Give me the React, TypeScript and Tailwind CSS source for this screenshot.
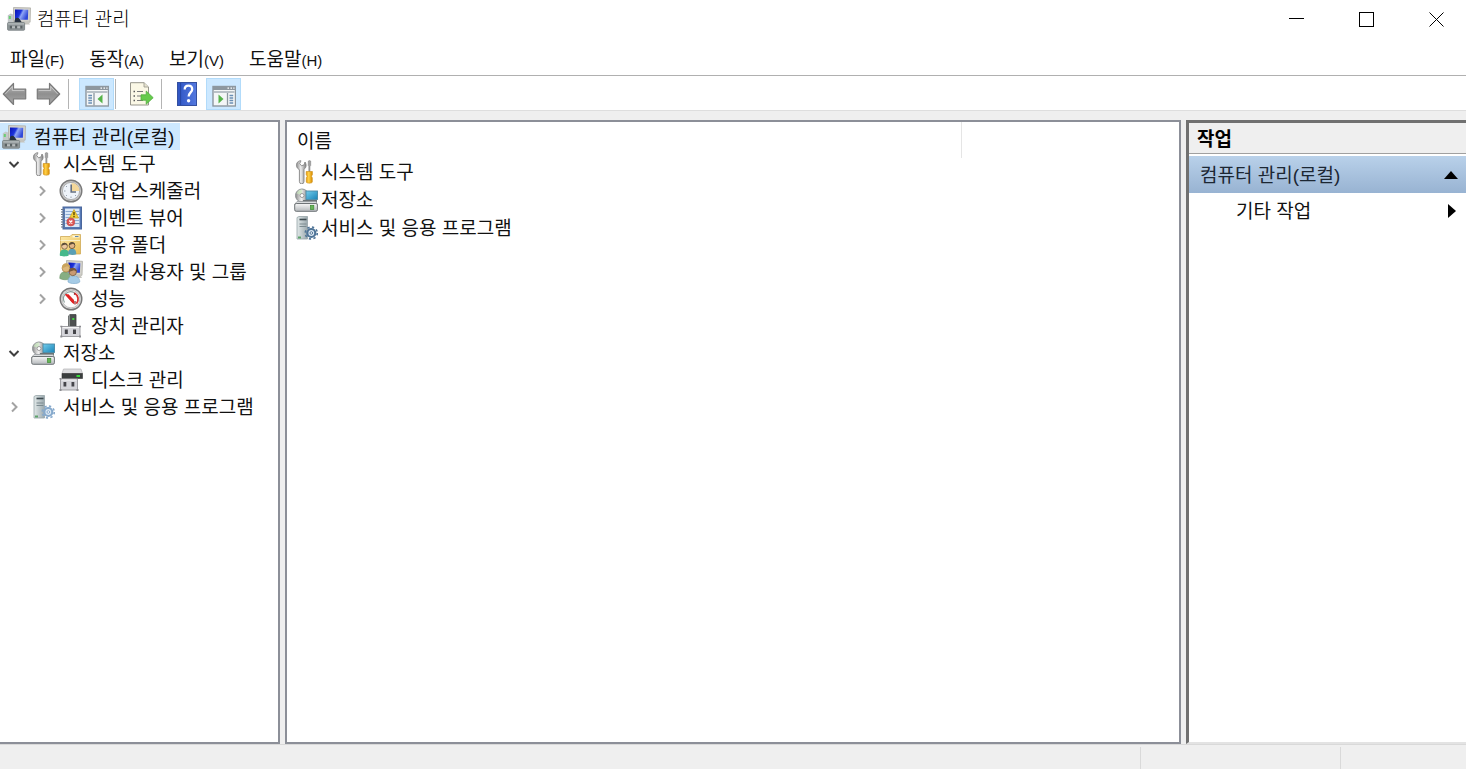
import { useState } from "react";
import type { ReactNode } from "react";

type IconProps = { className?: string };

function Icon({ className = "size-6", children }: IconProps & { children: ReactNode }) {
  return (
    <svg viewBox="0 0 24 24" className={`${className} shrink-0`} aria-hidden="true">
      {children}
    </svg>
  );
}

// Gradients shared by all icons
function IconDefs() {
  return (
    <svg className="absolute size-0" aria-hidden="true">
      <defs>
        <linearGradient id="screen" x1="0" y1="0" x2="1" y2="0.4">
          <stop offset="0" stopColor="#0a14b4" />
          <stop offset="0.45" stopColor="#1c34dc" />
          <stop offset="0.6" stopColor="#8fa6f5" />
          <stop offset="1" stopColor="#3049d8" />
        </linearGradient>
        <linearGradient id="metal" x1="0" y1="0" x2="1" y2="0">
          <stop offset="0" stopColor="#8a8a8a" />
          <stop offset="0.45" stopColor="#efefef" />
          <stop offset="1" stopColor="#7c7c7c" />
        </linearGradient>
        <linearGradient id="arrow" x1="0" y1="0" x2="0" y2="1">
          <stop offset="0" stopColor="#b8b8b8" />
          <stop offset="0.5" stopColor="#8f8f8f" />
          <stop offset="1" stopColor="#ababab" />
        </linearGradient>
        <linearGradient id="gold" x1="0" y1="0" x2="1" y2="0">
          <stop offset="0" stopColor="#e89a08" />
          <stop offset="0.4" stopColor="#ffd24a" />
          <stop offset="1" stopColor="#d98a00" />
        </linearGradient>
        <linearGradient id="book" x1="0" y1="0" x2="1" y2="0">
          <stop offset="0" stopColor="#2f55c4" />
          <stop offset="1" stopColor="#5479df" />
        </linearGradient>
        <linearGradient id="folder" x1="0" y1="0" x2="1" y2="1">
          <stop offset="0" stopColor="#fde9a6" />
          <stop offset="1" stopColor="#e9bf58" />
        </linearGradient>
        <linearGradient id="cyan" x1="0" y1="0" x2="1" y2="1">
          <stop offset="0" stopColor="#74cdec" />
          <stop offset="1" stopColor="#1984b8" />
        </linearGradient>
        <linearGradient id="box" x1="0" y1="0" x2="0" y2="1">
          <stop offset="0" stopColor="#f8f8f8" />
          <stop offset="1" stopColor="#b4b8bb" />
        </linearGradient>
        <linearGradient id="tower" x1="0" y1="0" x2="1" y2="0">
          <stop offset="0" stopColor="#e2e9e9" />
          <stop offset="1" stopColor="#9aa8ad" />
        </linearGradient>
      </defs>
    </svg>
  );
}

function ComputerIcon({ className }: IconProps) {
  return (
    <Icon className={className}>
      <path d="M6.500.5l17 .4-.4 14.300H6.500z" fill="#d3d2cc" stroke="#aeada6" strokeWidth="0.800" />
      <path d="M8 2.600l13.200.2-.3 10H8z" fill="url(#screen)" />
      <path d="M15 15.200h6.500l1.500 2.400h-8z" fill="#c6c5bf" />
      <path d="M.8 8.200l3-1.700 2.200 1V16H.8z" fill="#c3c7c9" />
      <path d="M1.800 9h2v3h-2z" fill="#68cf74" />
      <path d="M7.500 15.500c0-3 .8-4.700 2.600-4.700 2.200 0 2.800 1.800 4.800 4.700z" fill="#26303f" />
      <rect x="0.600" y="15.600" width="17" height="7.600" rx="0.800" fill="#8f9698" stroke="#7b8284" strokeWidth="0.900" />
      <path d="M1.200 16.900h15.900" stroke="#b9bfc0" strokeWidth="1.200" />
      <path d="M2.800 18.800h2.200v2.600H2.800zM8 18.800h2.200v2.600H8zM13.200 18.800h2.200v2.600h-2.200z" fill="#5a6264" />
      <path d="M5 20.100h3M10.200 20.100h3" stroke="#c5c9ca" strokeWidth="1.200" />
    </Icon>
  );
}

function ToolsIcon({ className }: IconProps) {
  return (
    <Icon className={className}>
      <path
        d="M3.200 2.500C5 .6 7 .6 7 .8L5.700 3.600l1.800 2.200 2.700-1L11 2c1.800 2.800 1.300 5.600-1 7.300V21.500a2.200 2.200 0 0 1-4.600 0V9.700C2.500 8.200 1.700 5 3.200 2.500z"
        fill="url(#metal)"
        stroke="#858585"
        strokeWidth="0.900"
      />
      <path d="M14.300 1l1.200-.6L16.700 1v4.500L16 6.500v6h-1.200v-6l-.6-1z" fill="#a2a2a2" stroke="#7d7d7d" strokeWidth="0.500" />
      <path d="M12.200 11.500h6.200v3.200l-1 1.500.9 1.600v4.200c0 1.500-6 1.500-6 0v-4.200l.9-1.600-1-1.500z" fill="url(#gold)" stroke="#c98b12" strokeWidth="0.600" />
    </Icon>
  );
}

function ClockIcon() {
  return (
    <Icon>
      <circle cx="12" cy="12" r="10.800" fill="#c9c9c9" stroke="#7a7a7a" strokeWidth="1.400" />
      <circle cx="12" cy="12" r="8.600" fill="#eef3f9" stroke="#a3a3a3" strokeWidth="0.800" />
      <path d="M12.500 12V4a8 8 0 0 1 8 8z" fill="#f3d79a" />
      <path d="M12.200 5.500V13H17" fill="none" stroke="#667080" strokeWidth="1.600" />
      <path d="M5 12h1.500M12 19v-1.500M7 7l1 1M7 17l1-1M17 17l-1-1" stroke="#9aa4b0" />
    </Icon>
  );
}

function EventIcon() {
  return (
    <Icon>
      <rect x="4" y="1" width="18.500" height="22" fill="#5578b5" stroke="#4a679c" />
      <rect x="6" y="2.500" width="14.500" height="18.500" fill="#dbe8f8" />
      <path d="M6.500 5.500H20M6.500 8.500H20M6.500 11.500H20M6.500 14.500H20M6.500 17.500H20" stroke="#8ca9d2" />
      <path d="M2 3.500h3.500M2 6h3.500M2 8.500h3.500M2 11h3.500M2 13.500h3.500M2 16h3.500M2 18.500h3.500M2 21h3.500" stroke="#67748a" strokeWidth="1.100" />
      <path d="M15 3.500l4.500 8.500h-9z" fill="#f3cf35" stroke="#c9a52a" strokeWidth="0.800" />
      <path d="M15 6v3.300M15 10v1.200" stroke="#4d3b00" strokeWidth="1.300" />
      <circle cx="11.800" cy="16" r="4" fill="#dc5656" stroke="#c04848" strokeWidth="0.600" />
      <path d="M10.300 14.500l3 3M13.300 14.500l-3 3" stroke="#fff" strokeWidth="1.300" />
    </Icon>
  );
}

function SharedFolderIcon() {
  return (
    <Icon>
      <path d="M1.500 3.500H11l2-2h8.500v19.500h-20z" fill="url(#folder)" stroke="#cfa955" strokeWidth="0.800" />
      <path d="M13.500 2.500h7v2h-7z" fill="#fff7d8" />
      <path d="M16 3.500h3.500" stroke="#5e87b0" />
      <path d="M1.500 7.500H21" stroke="#f9f0c6" />
      <path d="M.8 22.500c0-4.200 1.200-6 4.700-6s4.200 2 4.200 6c-2.500 1.200-6.900 1.200-8.900 0z" fill="#46b98b" />
      <path d="M9 21c0-3.800 1.500-5.200 4.300-5.200s4 1.800 4 5.400c-2.300 1-6.300 1-8.300-.2z" fill="#5a9fb4" />
      <circle cx="5.500" cy="13.300" r="2.900" fill="#ecc9a0" stroke="#7b5f3c" strokeWidth="0.800" />
      <circle cx="13" cy="12.700" r="2.900" fill="#e0b487" stroke="#5c4a30" strokeWidth="0.800" />
      <path d="M2.300 12.800c.2-4.200 6-4.200 6.400 0l-2.200-1.400zM9.800 12.200c.2-4.200 6-4.200 6.400 0L14 10.800z" fill="#5c4d38" />
    </Icon>
  );
}

function UsersIcon() {
  return (
    <Icon>
      <path d="M7.500.5l16 .8-.5 14-15.500-.5z" fill="#d3d2cc" stroke="#aeada6" strokeWidth="0.800" />
      <path d="M9.500 2.600l11.800.6-.4 9.500-11.400.1z" fill="url(#screen)" />
      <path d="M17 15h4.500l1.500 3h-6z" fill="#c6c5bf" />
      <path d="M.8 18.500C.8 13.500 2.500 12 6 12s5 2 5 7c-3 1.200-7.200 1-10.200-.5z" fill="#86ae83" stroke="#6b9468" strokeWidth="0.600" />
      <path d="M9 22c0-4.500 2.200-6 5.800-6s6 2 6 6c-2.500 2.200-8.800 2.200-11.800 0z" fill="#a5cbe6" stroke="#79a6c8" strokeWidth="0.600" />
      <circle cx="7" cy="8.200" r="3.900" fill="#ddb87b" stroke="#a5834a" strokeWidth="0.700" />
      <path d="M2.900 8.500C2.500 2 10.700 1.800 11.200 7L8 6.200z" fill="#c9a45e" />
      <circle cx="13.800" cy="12" r="3.700" fill="#c99a72" stroke="#6a5138" strokeWidth="0.700" />
      <path d="M9.900 12c-.2-5.600 7.500-5.600 8-.5l-3-1.200z" fill="#77583c" />
    </Icon>
  );
}

function GaugeIcon() {
  return (
    <Icon>
      <circle cx="12" cy="12" r="10.800" fill="#d9d9d9" stroke="#777" strokeWidth="1.400" />
      <circle cx="12" cy="12" r="8.800" fill="#fdfdfd" stroke="#b5b5b5" strokeWidth="0.800" />
      <path d="M5.500 15.500a7.200 7.200 0 0 1 9.500-10" fill="none" stroke="#8a9e9a" strokeWidth="1.100" />
      <path d="M15.500 5.500v2.200M16 14v3.500" stroke="#7d2a2a" strokeWidth="1.200" />
      <path d="M15.800 6.200a7 7 0 0 1 1.600 10.500" fill="none" stroke="#d93030" strokeWidth="1.800" />
      <path d="M6.500 7.200h3L15 13v3h-1.500z" fill="#e02424" />
      <path d="M6.500 7.200L15 16.500" stroke="#e02424" strokeWidth="1.600" />
    </Icon>
  );
}

function DeviceIcon() {
  return (
    <Icon>
      <path d="M11 .6h6v12.400h-7.500V2z" fill="#4d5050" stroke="#3c4040" strokeWidth="0.800" />
      <path d="M9.500 2L11 .6V13H9.500z" fill="#8d9191" />
      <rect x="13.300" y="4" width="2" height="2" fill="#3fdd3f" />
      <path d="M2.500 12.500h18.500v10H2.500z" fill="#d5d5da" stroke="#97979c" strokeWidth="0.900" />
      <path d="M3.500 13.500h16.500" stroke="#f5f5f5" />
      <rect x="5.800" y="15.500" width="3" height="4.500" fill="#45454a" />
      <rect x="14" y="15.500" width="3" height="4.500" fill="#45454a" />
      <path d="M1.300 21.500h2v2h-2zM20 21.500h2v2h-2zM1.300 11.800h2v1.500h-2zM20 11.800h2v1.500h-2z" fill="#8b8b90" />
    </Icon>
  );
}

function StorageIcon({ className }: IconProps) {
  return (
    <Icon className={className}>
      <circle cx="8" cy="7.500" r="6.500" fill="url(#metal)" stroke="#8f9496" />
      <path d="M2.500 5.500c1-2.500 3-4 5.500-4L8 7z" fill="#c9e8bd" opacity="0.700" />
      <circle cx="8" cy="7.500" r="2" fill="#fff" stroke="#888" strokeWidth="0.800" />
      <rect x="12" y="3" width="11.500" height="8.500" fill="url(#cyan)" stroke="#4b88a4" strokeWidth="0.900" />
      <path d="M9 12h14v2.500H9z" fill="#6b7376" />
      <path d="M3 13.500h19l1.500 3H.5z" fill="#dadddf" stroke="#929799" strokeWidth="0.700" />
      <rect x="0.700" y="15.500" width="22.700" height="7.800" rx="1.500" fill="url(#box)" stroke="#6f7477" />
      <rect x="16.500" y="17.300" width="3.300" height="4.200" fill="#66b557" stroke="#3f8a35" strokeWidth="0.700" />
    </Icon>
  );
}

function DiskIcon() {
  return (
    <Icon>
      <path d="M4.500 1h17.500l1.500 4.500H3z" fill="#dcdcde" stroke="#b3b3b6" strokeWidth="0.700" />
      <path d="M3 5.500h20.500v5H3z" fill="#3a3e3e" stroke="#333" strokeWidth="0.600" />
      <rect x="17.500" y="7" width="3.500" height="2" fill="#38d63a" />
      <path d="M1.500 11h17v11h-17z" fill="#d5d5da" stroke="#97979c" strokeWidth="0.900" />
      <path d="M2.500 12h15" stroke="#f5f5f5" />
      <rect x="4.500" y="14" width="2.800" height="4.500" fill="#45454a" />
      <rect x="12.500" y="14" width="2.800" height="4.500" fill="#45454a" />
      <path d="M.5 21h2v2h-2zM17.500 21h2v2h-2zM.5 10h2v1.500h-2z" fill="#8b8b90" />
    </Icon>
  );
}

function ServicesIcon({ className, gear = "#86a9cc" }: IconProps & { gear?: string }) {
  return (
    <Icon className={className}>
      <path d="M3 1.500l2-1h8.500v22.500H3z" fill="url(#tower)" stroke="#96a3a7" strokeWidth="0.800" />
      <path d="M5.500 3.500h7" stroke="#3e4b50" strokeWidth="1.600" />
      <path d="M5.500 8h7M5.500 10.500h7" stroke="#7c8b90" />
      <path d="M4 20.500h3v2H4z" fill="#5da36a" />
      <circle cx="17.300" cy="17" r="6" fill="none" stroke={gear} strokeWidth="1.600" strokeDasharray="2.300 2.400" />
      <circle cx="17.300" cy="17" r="4" fill="#dce8f3" stroke={gear} strokeWidth="2.200" />
      <circle cx="17.300" cy="17" r="1.300" fill="#fff" stroke={gear} />
    </Icon>
  );
}

function BackIcon() {
  return (
    <Icon className="h-6 w-[25px]">
      <path d="M.8 12L11 1.500v5.700h12.200v9.600H11v5.700z" fill="url(#arrow)" stroke="#7b7b7b" strokeWidth="1.200" strokeLinejoin="round" />
      <path d="M2.800 12L9.800 4.500v4h12" fill="none" stroke="#cfcfcf" strokeWidth="0.800" />
    </Icon>
  );
}

function ForwardIcon() {
  return (
    <Icon className="h-6 w-[25px]">
      <path d="M23.200 12L13 1.500v5.700H.8v9.600H13v5.700z" fill="url(#arrow)" stroke="#7b7b7b" strokeWidth="1.200" strokeLinejoin="round" />
      <path d="M21.200 12L14.200 4.500v4h-12" fill="none" stroke="#cfcfcf" strokeWidth="0.800" />
    </Icon>
  );
}

function PaneIcon({ side }: { side: "left" | "right" }) {
  return (
    <Icon>
      <rect x="1" y="2.500" width="22.500" height="19.500" fill="#f4f6f7" stroke="#8d979f" strokeWidth="1.400" />
      <rect x="1" y="2.500" width="22.500" height="3.500" fill="#8d979f" />
      <path d="M15.500 4.200h1.500M18.500 4.200h1.500M21.300 4.200h1.200" stroke="#fff" strokeWidth="1.300" />
      <path d="M2 8h20.500" stroke="#b3bbc1" strokeWidth="1.800" />
      {side === "left" ? (
        <>
          <path d="M9 9v12.500" stroke="#8d979f" strokeWidth="1.300" />
          <path d="M3.300 11.500h3.700M3.300 14h3.700M3.300 16.500h3.700M3.300 19h3.700" stroke="#6a8fb5" strokeWidth="1.300" />
          <path d="M17.500 10.500v9L12.500 15z" fill="#56b34a" />
        </>
      ) : (
        <>
          <path d="M15.500 9v12.500" stroke="#8d979f" strokeWidth="1.300" />
          <path d="M17.500 11.500h3.700M17.500 14h3.700M17.500 16.500h3.700M17.500 19h3.700" stroke="#6a8fb5" strokeWidth="1.300" />
          <path d="M6.500 10.500v9l5-4.500z" fill="#56b34a" />
        </>
      )}
    </Icon>
  );
}

function ExportIcon() {
  return (
    <Icon className="h-6 w-[25px]">
      <path d="M1 .7h13.500L19 5v18H1z" fill="#fbf8e6" stroke="#97968c" />
      <path d="M14.500.7V5H19" fill="#e6e3cf" stroke="#97968c" strokeWidth="0.800" />
      <path d="M4 9.500h1.500M4 14h1.500M4 18.500h1.500" stroke="#5a5a5a" strokeWidth="1.400" />
      <path d="M7.500 9.500h6M7.500 14h4M7.500 18.500h6" stroke="#7a7a7a" strokeWidth="1.200" />
      <path d="M11.500 12.800h5.200V9l7 6.700-7 6.500v-4h-5.200z" fill="#66cb4c" stroke="#52ad40" strokeWidth="0.800" />
    </Icon>
  );
}

function HelpIcon() {
  return (
    <Icon>
      <rect x="2.500" y="0.500" width="19" height="23" fill="url(#book)" stroke="#3450a0" />
      <path d="M5.500 1v22" stroke="#2747a6" strokeWidth="1.200" />
      <path
        d="M9.700 7.500C9.700 5 11.300 3.600 13.500 3.600s3.700 1.400 3.700 3.600c0 3.200-3.500 3.300-3.500 7.300"
        fill="none"
        stroke="#fff"
        strokeWidth="2.300"
      />
      <circle cx="13.600" cy="18.700" r="1.700" fill="#fff" />
    </Icon>
  );
}

function Chevron({ open }: { open: boolean }) {
  return (
    <svg viewBox="0 0 12 12" className="size-3" aria-hidden="true" fill="none" strokeWidth="2">
      {open ? <path d="M1.500 4L6 8.500 10.500 4" stroke="#404040" /> : <path d="M4 1.500L8.500 6 4 10.500" stroke="#a3a3a3" />}
    </svg>
  );
}

// Hangul glyphs sit high in the line box, so every label gets the same top padding
function Label({ children }: { children: ReactNode }) {
  return <span className="pt-0.5 whitespace-nowrap">{children}</span>;
}

type Node = { label: string; icon: ReactNode; open?: boolean; children?: Node[]; leaf?: boolean };

const tree: Node[] = [
  {
    label: "시스템 도구",
    icon: <ToolsIcon />,
    open: true,
    children: [
      { label: "작업 스케줄러", icon: <ClockIcon /> },
      { label: "이벤트 뷰어", icon: <EventIcon /> },
      { label: "공유 폴더", icon: <SharedFolderIcon /> },
      { label: "로컬 사용자 및 그룹", icon: <UsersIcon /> },
      { label: "성능", icon: <GaugeIcon /> },
      { label: "장치 관리자", icon: <DeviceIcon />, leaf: true },
    ],
  },
  {
    label: "저장소",
    icon: <StorageIcon />,
    open: true,
    children: [{ label: "디스크 관리", icon: <DiskIcon />, leaf: true }],
  },
  { label: "서비스 및 응용 프로그램", icon: <ServicesIcon /> },
];

function TreeNode({ node }: { node: Node }) {
  const [open, setOpen] = useState(Boolean(node.open));
  return (
    <li>
      <div className="flex h-[27px] items-center">
        {node.leaf ? (
          <span className="w-7" />
        ) : (
          <button
            type="button"
            aria-label={node.label}
            aria-expanded={open}
            onClick={() => setOpen(!open)}
            className="flex h-full w-7 items-center justify-center"
          >
            <Chevron open={open} />
          </button>
        )}
        <button type="button" className="flex items-center gap-2 pl-[3px]">
          {node.icon}
          <Label>{node.label}</Label>
        </button>
      </div>
      {open && node.children && (
        <ul className="pl-7">
          {node.children.map((child) => (
            <TreeNode key={child.label} node={child} />
          ))}
        </ul>
      )}
    </li>
  );
}

const menus = [
  ["파일", "(F)"],
  ["동작", "(A)"],
  ["보기", "(V)"],
  ["도움말", "(H)"],
];

const rows = [
  { label: "시스템 도구", icon: <ToolsIcon /> },
  { label: "저장소", icon: <StorageIcon /> },
  { label: "서비스 및 응용 프로그램", icon: <ServicesIcon gear="#4f7497" /> },
];

function Separator() {
  return <span className="h-[30px] w-px bg-[#b4b4b4]" />;
}

export default function App() {
  return (
    <div className="flex min-h-screen flex-col bg-[#efefef] font-['Liberation_Sans','Noto_Sans_CJK_KR',sans-serif] text-[19px] leading-6 text-[#111]">
      <IconDefs />
      <header className="flex h-[38px] items-center justify-between bg-white pl-[7px]">
        <h1 className="flex items-center gap-1.5 font-light text-black">
          <ComputerIcon />
          <Label>컴퓨터 관리</Label>
        </h1>
        <div className="flex h-full gap-2.5">
          <button type="button" aria-label="최소화" className="flex w-[60px] items-center justify-center">
            <svg viewBox="0 0 15 15" className="size-[15px]" fill="none" stroke="#000">
              <path d="M0 6.500h15" />
            </svg>
          </button>
          <button type="button" aria-label="최대화" className="flex w-[60px] items-center justify-center">
            <svg viewBox="0 0 15 15" className="size-[15px]" fill="none" stroke="#000">
              <rect x="0.500" y="0.500" width="14" height="14" />
            </svg>
          </button>
          <button type="button" aria-label="닫기" className="flex w-[60px] items-center justify-center">
            <svg viewBox="0 0 15 15" className="size-[15px]" fill="none" stroke="#000">
              <path d="M0.500 0.500l14 14M14.500 0.500l-14 14" />
            </svg>
          </button>
        </div>
      </header>

      <nav className="flex h-[38px] items-center gap-[25px] border-b border-[#b0b0b0] bg-white pt-1.5 pl-2.5">
        {menus.map(([name, key]) => (
          <button key={name} type="button" className="flex">
            <Label>
              {name}
              <span className="text-[15px]">{key}</span>
            </Label>
          </button>
        ))}
      </nav>

      <div className="flex h-[35px] items-center border-b border-[#dedede] bg-white pt-0.5 pl-0.5">
        <button type="button" aria-label="뒤로">
          <BackIcon />
        </button>
        <button type="button" aria-label="앞으로" className="mr-[7px] ml-[9px]">
          <ForwardIcon />
        </button>
        <Separator />
        <button
          type="button"
          aria-label="콘솔 트리 표시"
          className="mr-px ml-2.5 flex h-8 w-[35px] items-center justify-center border border-[#b2dbfa] bg-[#cce8ff] pt-1"
        >
          <PaneIcon side="left" />
        </button>
        <Separator />
        <button type="button" aria-label="목록 내보내기" className="mr-[7px] ml-[13px]">
          <ExportIcon />
        </button>
        <Separator />
        <button type="button" aria-label="도움말" className="mr-[7px] ml-[13px]">
          <HelpIcon />
        </button>
        <button
          type="button"
          aria-label="작업 창 표시"
          className="flex h-8 w-[35px] items-center justify-center border border-[#b2dbfa] bg-[#cce8ff] pt-1"
        >
          <PaneIcon side="right" />
        </button>
      </div>

      <main className="flex flex-1 pt-[9px]">
        <aside className="w-[280px] shrink-0 border-y-2 border-r-2 border-[#8c8f98] bg-white pt-px">
          <button type="button" className="flex h-[27px] items-center gap-2 bg-[#cde8ff] pr-1.5 pl-0.5">
            <ComputerIcon />
            <Label>컴퓨터 관리(로컬)</Label>
          </button>
          <ul>
            {tree.map((node) => (
              <TreeNode key={node.label} node={node} />
            ))}
          </ul>
        </aside>

        <section className="ml-[5px] min-w-0 flex-1 border-2 border-[#8c8f98] bg-white">
          <table className="w-full border-collapse text-left">
            <thead>
              <tr className="h-9">
                <th className="border-r border-[#e5e5e5] p-0 pl-2.5 font-normal">
                  <span className="flex pt-0.5">
                    <Label>이름</Label>
                  </span>
                </th>
                <th className="w-[218px]" aria-label="설명" />
              </tr>
            </thead>
            <tbody>
              {rows.map((row) => (
                <tr key={row.label}>
                  <td colSpan={2} className="h-[28px] p-0 pl-[7px]">
                    <div className="flex items-center gap-[3px]">
                      {row.icon}
                      <Label>{row.label}</Label>
                    </div>
                  </td>
                </tr>
              ))}
            </tbody>
          </table>
        </section>

        <aside className="ml-[5px] flex w-[280px] shrink-0 flex-col border-t-3 border-b-2 border-l-3 border-t-[#707070] border-b-[#e3e3e3] border-l-[#707070] bg-white">
          <h2 className="flex h-[31px] items-center border-b border-[#a0a0a0] bg-[#efefef] pt-0.5 pl-2 font-bold text-black">
            <Label>작업</Label>
          </h2>
          <button
            type="button"
            className="mt-0.5 flex h-[37px] items-center justify-between bg-linear-to-b from-[#b9d1ea] to-[#98b3d2] pr-2 pl-[11px] text-[#1c2733]"
          >
            <Label>컴퓨터 관리(로컬)</Label>
            <svg viewBox="0 0 14 8" className="h-2 w-3.5" aria-hidden="true">
              <path d="M0 8L7 0l7 8z" fill="#000" />
            </svg>
          </button>
          <button type="button" className="flex h-9 items-center justify-between pr-[10px] pl-[47px]">
            <Label>기타 작업</Label>
            <svg viewBox="0 0 8 14" className="h-3.5 w-2" aria-hidden="true">
              <path d="M0 0l8 7-8 7z" fill="#000" />
            </svg>
          </button>
        </aside>
      </main>

      <footer className="flex h-[25px] justify-end border-t border-[#d9d9d9] pt-0.5">
        <span className="w-[200px] border-l border-[#d9d9d9]" />
        <span className="w-[126px] border-l border-[#d9d9d9]" />
      </footer>
    </div>
  );
}
